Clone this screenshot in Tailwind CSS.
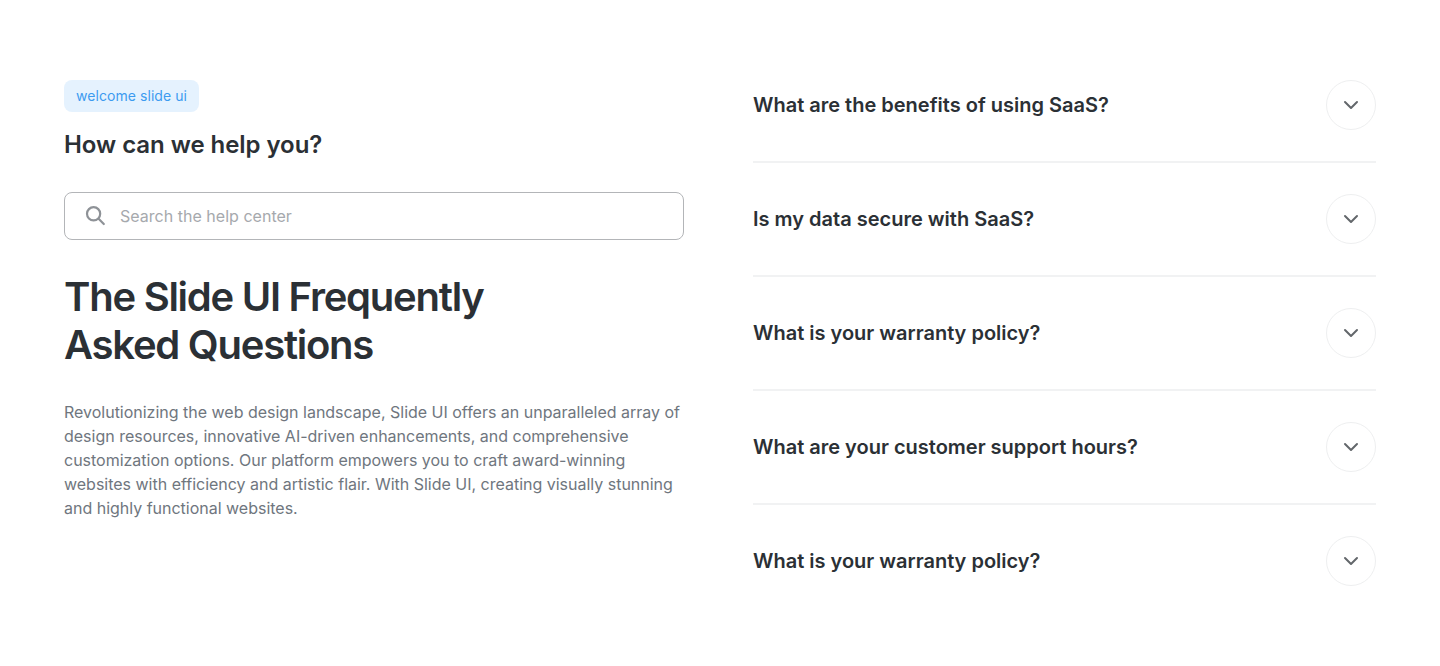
<!DOCTYPE html>
<html>
<head>
<meta charset="utf-8">
<meta name="viewport" content="width=device-width, initial-scale=1">
<title>Slide UI FAQ</title>
<script src="https://cdn.jsdelivr.net/npm/@tailwindcss/browser@4"></script>
</head>
<body class="bg-white font-['Inter',sans-serif]">
<div class="flex justify-between w-[1440px] h-[666px] px-16 pt-20 overflow-hidden">

  <div class="w-[620px]">
    <span class="inline-block h-8 px-3 rounded-lg bg-[#e5f2fe] text-sm leading-8 tracking-[0.06px] text-[#3c9bf0]">welcome slide ui</span>
    <h3 class="mt-[15px] text-2xl leading-[36px] font-semibold tracking-[-0.05px] text-[#2b3035]">How can we help you?</h3>
    <div class="flex items-center gap-[13px] h-12 mt-[29px] pl-5 border border-[#b3b5b8] rounded-lg">
      <svg class="w-[22px] h-[22px]" viewBox="0 0 22 22" fill="none" stroke="#8e9297" stroke-width="2.2" stroke-linecap="round"><circle cx="8.6" cy="8.8" r="6.6"/><path d="M13.6 13.8l5.2 5.2"/></svg>
      <span class="text-base tracking-[0.02px] text-[#a6a9ad]">Search the help center</span>
    </div>
    <h1 class="mt-[33px] text-[40px] leading-[48px] font-semibold tracking-[-1.25px] text-[#2b3035]">The Slide UI Frequently<br>Asked Questions</h1>
    <p class="mt-[31px] text-base leading-6 tracking-[-0.01px] text-[#6f767e]">Revolutionizing the web design landscape, Slide UI offers an unparalleled array of design resources, innovative AI-driven enhancements, and comprehensive customization options. Our platform empowers you to craft award-winning websites with efficiency and artistic flair. With Slide UI, creating visually stunning and highly functional websites.</p>
  </div>

  <div class="flex flex-col gap-[31px] w-[623px]">
    <div class="flex items-start justify-between pb-[31px] border-b-2 border-[#f1f2f3]">
      <h4 class="text-xl leading-[50px] font-semibold text-[#2b3035]">What are the benefits of using SaaS?</h4>
      <div class="flex items-center justify-center w-[50px] h-[50px] rounded-full border border-[#eeeff0]">
        <svg class="w-4 h-4" viewBox="0 0 16 16" fill="none" stroke="#63676b" stroke-width="2" stroke-linecap="round" stroke-linejoin="round"><path d="M2 5l6 6 6-6"/></svg>
      </div>
    </div>
    <div class="flex items-start justify-between pb-[31px] border-b-2 border-[#f1f2f3]">
      <h4 class="text-xl leading-[50px] font-semibold text-[#2b3035]">Is my data secure with SaaS?</h4>
      <div class="flex items-center justify-center w-[50px] h-[50px] rounded-full border border-[#eeeff0]">
        <svg class="w-4 h-4" viewBox="0 0 16 16" fill="none" stroke="#63676b" stroke-width="2" stroke-linecap="round" stroke-linejoin="round"><path d="M2 5l6 6 6-6"/></svg>
      </div>
    </div>
    <div class="flex items-start justify-between pb-[31px] border-b-2 border-[#f1f2f3]">
      <h4 class="text-xl leading-[50px] font-semibold text-[#2b3035]">What is your warranty policy?</h4>
      <div class="flex items-center justify-center w-[50px] h-[50px] rounded-full border border-[#eeeff0]">
        <svg class="w-4 h-4" viewBox="0 0 16 16" fill="none" stroke="#63676b" stroke-width="2" stroke-linecap="round" stroke-linejoin="round"><path d="M2 5l6 6 6-6"/></svg>
      </div>
    </div>
    <div class="flex items-start justify-between pb-[31px] border-b-2 border-[#f1f2f3]">
      <h4 class="text-xl leading-[50px] font-semibold text-[#2b3035]">What are your customer support hours?</h4>
      <div class="flex items-center justify-center w-[50px] h-[50px] rounded-full border border-[#eeeff0]">
        <svg class="w-4 h-4" viewBox="0 0 16 16" fill="none" stroke="#63676b" stroke-width="2" stroke-linecap="round" stroke-linejoin="round"><path d="M2 5l6 6 6-6"/></svg>
      </div>
    </div>
    <div class="flex items-start justify-between">
      <h4 class="text-xl leading-[50px] font-semibold text-[#2b3035]">What is your warranty policy?</h4>
      <div class="flex items-center justify-center w-[50px] h-[50px] rounded-full border border-[#eeeff0]">
        <svg class="w-4 h-4" viewBox="0 0 16 16" fill="none" stroke="#63676b" stroke-width="2" stroke-linecap="round" stroke-linejoin="round"><path d="M2 5l6 6 6-6"/></svg>
      </div>
    </div>
  </div>

</div>
</body>
</html>
